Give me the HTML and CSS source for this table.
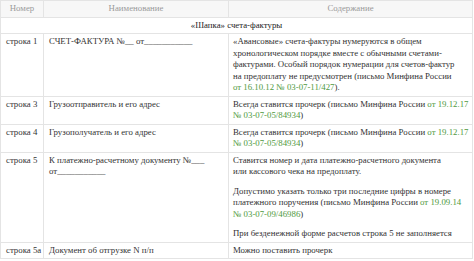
FILE: index.html
```html
<!DOCTYPE html>
<html lang="ru">
<head>
<meta charset="utf-8">
<link rel="stylesheet" href="styles.css">
</head>
<body>
<table class="invoice">
  <colgroup>
    <col class="c-num">
    <col class="c-name">
    <col class="c-desc">
  </colgroup>
  <thead>
    <tr class="head">
      <th>Номер</th>
      <th>Наименование</th>
      <th>Содержание</th>
    </tr>
  </thead>
  <tbody>
    <tr class="section">
      <td colspan="3">«Шапка» счета-фактуры</td>
    </tr>
    <tr>
      <td class="num">строка 1</td>
      <td>СЧЕТ-ФАКТУРА №__ от___________</td>
      <td class="desc">«Авансовые» счета-фактуры нумеруются в общем<br>хронологическом порядке вместе с обычными счетами-<br>фактурами. Особый порядок нумерации для счетов-фактур<br>на предоплату не предусмотрен (письмо Минфина России<br><span class="ref">от 16.10.12 № 03-07-11/427</span>).</td>
    </tr>
    <tr>
      <td class="num">строка 3</td>
      <td>Грузоотправитель и его адрес</td>
      <td class="desc">Всегда ставится прочерк (письмо Минфина России <span class="ref">от 19.12.17<br>№ 03-07-05/84934</span>)</td>
    </tr>
    <tr>
      <td class="num">строка 4</td>
      <td>Грузополучатель и его адрес</td>
      <td class="desc">Всегда ставится прочерк (письмо Минфина России <span class="ref">от 19.12.17<br>№ 03-07-05/84934</span>)</td>
    </tr>
    <tr>
      <td class="num">строка 5</td>
      <td>К платежно-расчетному документу №___<br>от___________</td>
      <td class="desc">
        <p>Ставится номер и дата платежно-расчетного документа<br>или кассового чека на предоплату.</p>
        <p>Допустимо указать только три последние цифры в номере<br>платежного поручения (письмо Минфина России <span class="ref">от 19.09.14<br>№ 03-07-09/46986</span>)</p>
        <p>При безденежной форме расчетов строка 5 не заполняется</p>
      </td>
    </tr>
    <tr>
      <td class="num">строка 5а</td>
      <td>Документ об отгрузке N п/п</td>
      <td class="desc">Можно поставить прочерк</td>
    </tr>
  </tbody>
</table>
</body>
</html>
```

FILE: styles.css
```css
html, body {
  margin: 0;
  padding: 0;
  background: #ffffff;
}

.invoice {
  width: 473px;
  border-collapse: collapse;
  table-layout: fixed;
  font-family: "Liberation Serif", "Times New Roman", serif;
  font-size: 8.8px;
  line-height: 11.5px;
  color: #333333;
}

.c-num { width: 43px; }
.c-name { width: 185px; }

.invoice th,
.invoice td {
  border: 1px solid #e4e4e4;
  padding: 2px 5px;
  vertical-align: top;
  text-align: left;
}

.invoice .num {
  white-space: nowrap;
  padding-left: 5px;
  padding-right: 2px;
}

.invoice .desc {
  white-space: nowrap;
  padding-left: 4px;
  padding-right: 2px;
}

.invoice .head th {
  background: #f7f7f7;
  color: #9a9a9a;
  font-weight: normal;
  text-align: center;
}

.invoice .section td {
  text-align: center;
  color: #222222;
}

.invoice p {
  margin: 0 0 8px;
}

.invoice p:last-child {
  margin-bottom: 0;
}

.ref {
  color: #4f9a3e;
}
```
